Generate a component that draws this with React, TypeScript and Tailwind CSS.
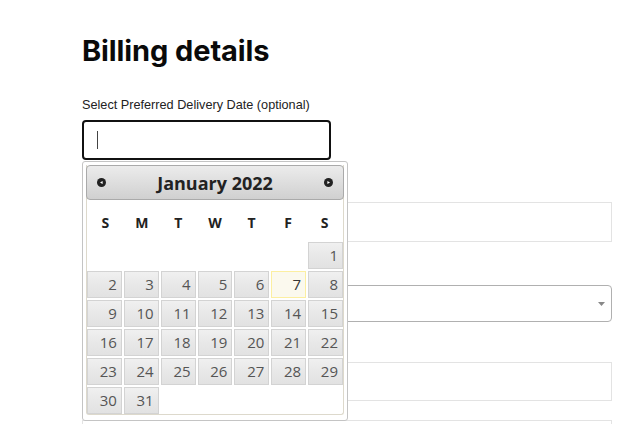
import React from "react";

const dayNames = ["S", "M", "T", "W", "T", "F", "S"];

function NavIcon({ dir }: { dir: "prev" | "next" }) {
  return (
    <svg width="9" height="9" viewBox="0 0 9 9">
      <circle cx="4.5" cy="4.5" r="4.5" fill="#222" />
      {dir === "prev" ? (
        <path d="M3 4.5 L5.6 3 L5.6 6 Z" fill="#fff" />
      ) : (
        <path d="M6 4.5 L3.4 3 L3.4 6 Z" fill="#fff" />
      )}
    </svg>
  );
}

export default function App() {
  const cells: (number | null)[] = [
    ...Array.from({ length: 6 }, () => null),
    ...Array.from({ length: 31 }, (_, i) => i + 1),
  ];
  return (
    <div className="w-[624px] h-[424px] overflow-hidden bg-white pl-[82px] pt-[33px]">
      <h1 className="font-['Inter',sans-serif] font-bold text-[29px] leading-[35px] tracking-[-0.1px] text-[#0a0a0a]">
        Billing details
      </h1>
      <div className="mt-[30px] font-['Liberation_Sans',Arial,sans-serif] text-[12.7px] leading-[15px] text-[#222]">
        Select Preferred Delivery Date (optional)
      </div>
      <div className="relative mt-[7px] w-[249px]">
        <div className="h-[40px] border-2 border-[#111] rounded-[4px] flex items-center pl-[13px] bg-white">
          <span className="w-px h-[18px] bg-[#444]" />
        </div>
        <div className="absolute left-0 top-full mt-px z-10 w-[266px] bg-white border border-[#c4c4c4] rounded-[3px] pt-[3px] px-[3px] pb-[5px] font-['Open_Sans',sans-serif]">
          <div className="border-x border-b border-[#ddd9cc] rounded-b-[3px]">
            <div className="h-[35px] -mx-px border border-[#aaa] rounded-[4px] bg-gradient-to-b from-[#ececec] to-[#d0d0d0] flex items-center justify-between px-[10px]">
              <NavIcon dir="prev" />
              <span className="text-[18px] font-bold text-[#222] leading-none">January 2022</span>
              <NavIcon dir="next" />
            </div>
            <div className="grid grid-cols-7 h-[42px] items-center pt-[2px]">
              {dayNames.map((d, i) => (
                <div key={i} className="text-center text-[14px] font-bold text-[#222]">
                  {d}
                </div>
              ))}
            </div>
            <div className="grid grid-cols-7 gap-[2px]">
              {cells.map((c, i) =>
                c === null ? (
                  <div key={i} className="h-[27px]" />
                ) : c === 7 ? (
                  <div
                    key={i}
                    className="h-[27px] border border-[#fcefa1] bg-[#fbf9ee] text-right pr-[4px] text-[15px] leading-[25px] text-[#363636]"
                  >
                    {c}
                  </div>
                ) : (
                  <div
                    key={i}
                    className="h-[27px] border border-[#d3d3d3] bg-gradient-to-b from-[#f0f0f0] via-[#e8e8e8] to-[#e2e2e2] text-right pr-[4px] text-[15px] leading-[25px] text-[#555]"
                  >
                    {c}
                  </div>
                )
              )}
            </div>
          </div>
        </div>
      </div>
      <div className="w-[530px]">
        <div className="mt-[42px] h-[40px] border border-[#e3e3e3]" />
        <div className="mt-[43px] h-[37px] border border-[#b0b0b0] rounded-[4px] flex items-center justify-end pr-[6px]">
          <svg width="7" height="4" viewBox="0 0 7 4">
            <path d="M0 0 L7 0 L3.5 4 Z" fill="#888" />
          </svg>
        </div>
        <div className="mt-[40px] h-[39px] border border-[#e3e3e3]" />
        <div className="mt-[19px] h-[40px] border border-[#e3e3e3]" />
      </div>
    </div>
  );
}
